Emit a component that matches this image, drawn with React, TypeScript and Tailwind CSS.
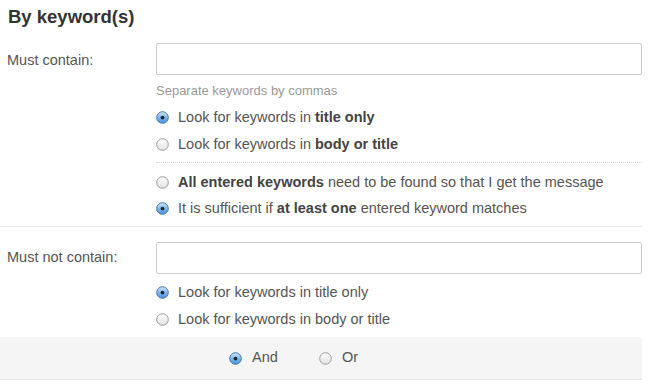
import React, { useId } from "react";

function Radio({ checked }: { checked?: boolean }) {
  const id = useId().replace(/:/g, "");
  return (
    <svg width="13" height="13" viewBox="0 0 13 13" className="shrink-0">
      <defs>
        <linearGradient id={`g${id}`} x1="0" y1="0" x2="0" y2="1">
          {checked ? (
            <>
              <stop offset="0" stopColor="#cfe6fb" />
              <stop offset="0.5" stopColor="#7db8ef" />
              <stop offset="1" stopColor="#3f92e3" />
            </>
          ) : (
            <>
              <stop offset="0" stopColor="#ffffff" />
              <stop offset="1" stopColor="#e2e2e2" />
            </>
          )}
        </linearGradient>
      </defs>
      <circle
        cx="6.5"
        cy="6.5"
        r="5.8"
        fill={`url(#g${id})`}
        stroke={checked ? "#4a78a8" : "#9c9c9c"}
        strokeWidth="1"
      />
      {checked && <circle cx="6.5" cy="6.6" r="1.9" fill="#1d2733" />}
    </svg>
  );
}

function Option({ checked, children, h = "h-[27px]" }: { checked?: boolean; children: React.ReactNode; h?: string }) {
  return (
    <div className={`flex items-center ${h}`}>
      <Radio checked={checked} />
      <span className="ml-[9px] text-[14.5px] text-[#555] leading-none">{children}</span>
    </div>
  );
}

export default function App() {
  return (
    <div
      className="w-[664px] h-[385px] bg-white overflow-hidden"
      style={{ fontFamily: '"Liberation Sans", Arial, sans-serif' }}
    >
      <div className="pl-[8px] pt-[7px] h-[27px] text-[18.5px] leading-[20px] font-bold text-[#333]">
        By keyword(s)
      </div>

      {/* Must contain */}
      <div className="flex w-[642px] border-b border-[#e6e6e6] pb-[5px]">
        <div className="w-[156px] pl-[7px] pt-[25px] text-[14.5px] leading-[16px] text-[#555]">
          Must contain:
        </div>
        <div className="flex-1 pt-[16px]">
          <div className="h-[32px] border border-[#cccccc] rounded-[2px] bg-white" />
          <div className="mt-[8px] text-[13px] leading-[16px] text-[#999]">Separate keywords by commas</div>
          <div className="mt-[5px]">
            <Option checked>
              Look for keywords in <b className="text-[#444]">title only</b>
            </Option>
            <Option>
              Look for keywords in <b className="text-[#444]">body or title</b>
            </Option>
          </div>
          <div className="mt-[4px] border-t border-dotted border-[#d4d4d4]" />
          <div className="pt-[6px]">
            <Option h="h-[26px]">
              <b className="text-[#444]">All entered keywords</b> need to be found so that I get the message
            </Option>
            <Option checked h="h-[26px]">
              It is sufficient if <b className="text-[#444]">at least one</b> entered keyword matches
            </Option>
          </div>
        </div>
      </div>

      {/* Must not contain */}
      <div className="flex w-[642px] pt-[15px]">
        <div className="w-[156px] pl-[7px] h-[32px] flex items-center text-[14.5px] text-[#555]">
          Must not contain:
        </div>
        <div className="flex-1">
          <div className="h-[32px] border border-[#cccccc] rounded-[2px] bg-white" />
          <div className="mt-[5px]">
            <Option checked>Look for keywords in title only</Option>
            <Option>Look for keywords in body or title</Option>
          </div>
        </div>
      </div>

      <div className="mt-[4px] w-[642px] h-[43px] bg-[#f5f5f5] border-b border-[#e6e6e6] flex items-center pl-[229px]">
        <div className="w-[90px] flex items-center">
          <Radio checked />
          <span className="ml-[10px] text-[14.5px] text-[#555]">And</span>
        </div>
        <div className="flex items-center">
          <Radio />
          <span className="ml-[10px] text-[14.5px] text-[#555]">Or</span>
        </div>
      </div>
    </div>
  );
}
